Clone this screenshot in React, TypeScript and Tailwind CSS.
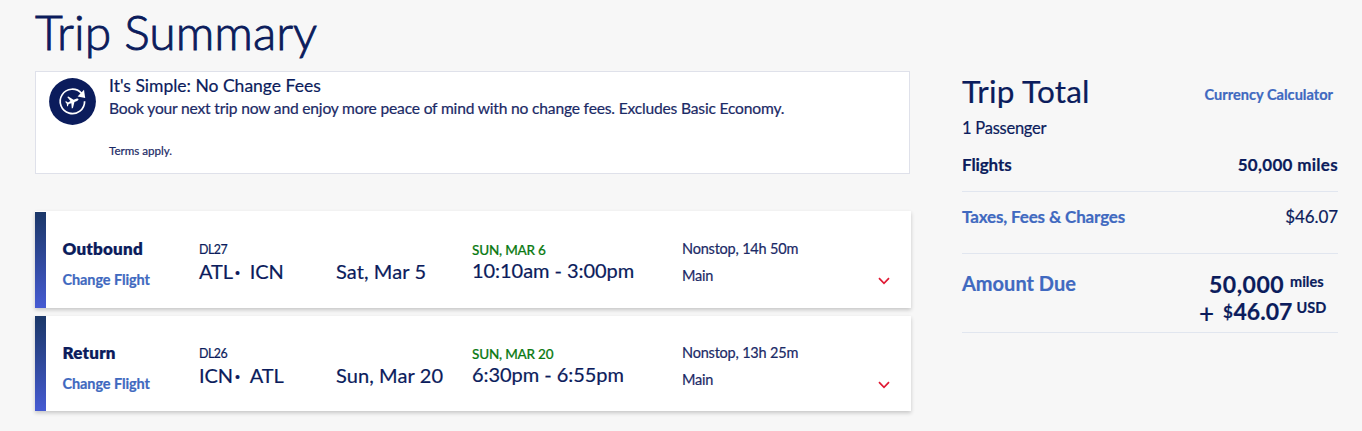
import React from "react";
import { clsx } from "clsx";

interface Flight {
  direction: string;
  number: string;
  from: string;
  to: string;
  date: string;
  arrival: string;
  times: string;
  duration: string;
  cabin: string;
}

const flights: Flight[] = [
  {
    direction: "Outbound",
    number: "DL27",
    from: "ATL",
    to: "ICN",
    date: "Sat, Mar 5",
    arrival: "SUN, MAR 6",
    times: "10:10am - 3:00pm",
    duration: "Nonstop, 14h 50m",
    cabin: "Main",
  },
  {
    direction: "Return",
    number: "DL26",
    from: "ICN",
    to: "ATL",
    date: "Sun, Mar 20",
    arrival: "SUN, MAR 20",
    times: "6:30pm - 6:55pm",
    duration: "Nonstop, 13h 25m",
    cabin: "Main",
  },
];

const NoChangeFeeIcon = () => (
  <svg viewBox="0 0 47 47" className="h-[47px] w-[47px] shrink-0">
    <circle cx="23.5" cy="23.5" r="23.4" fill="#0b1c5c" />
    <path
      d="M32.6 15.4A12.2 12.2 0 1 0 35.6 23.2"
      fill="none"
      stroke="#fff"
      strokeWidth="1.7"
    />
    <path d="M35 11.8L36.2 20L28.6 18.6Z" fill="#fff" />
    <g transform="translate(23.3 23.6) rotate(68) scale(0.58)" fill="#fff">
      <path d="M0 -11.5C1.3 -11.5 2 -9.6 2 -8L2 -3.2L10.5 3L10.5 5.2L2 2.6L1.5 7.4L4.4 9.8L4.4 11.5L0 10.3L-4.4 11.5L-4.4 9.8L-1.5 7.4L-2 2.6L-10.5 5.2L-10.5 3L-2 -3.2L-2 -8C-2 -9.6 -1.3 -11.5 0 -11.5Z" />
    </g>
  </svg>
);

const ChangeFeeBanner = () => (
  <div className="flex h-[103px] w-[875px] border border-[#dfe1ea] bg-white pl-[13px]">
    <div className="pt-[6px]">
      <NoChangeFeeIcon />
    </div>
    <div className="ml-[13px] pt-[2px]">
      <h2 className="text-[17.5px] leading-[23px]">It's Simple: No Change Fees</h2>
      <p className="text-[15.6px] leading-[23px] tracking-[-0.18px] text-[#1b2a66]">
        Book your next trip now and enjoy more peace of mind with no change fees. Excludes Basic Economy.
      </p>
      <p className="mt-[21px] text-[11.6px] leading-5 text-[#1b2a66]">Terms apply.</p>
    </div>
  </div>
);

interface FlightCardProps {
  flight: Flight;
  className?: string;
}

const FlightCard = ({ flight, className }: FlightCardProps) => (
  <div className={clsx("flex w-[876px] bg-white shadow-[0_2px_4px_rgba(0,0,0,0.2)]", className)}>
    <div className="w-[11px] bg-linear-to-b from-[#1b3768] to-[#465bd3]" />
    <div className="w-[138px] pt-[25px] pl-[16.5px]">
      <div className="text-[17px] leading-6 font-extrabold tracking-[0.2px]">{flight.direction}</div>
      <a className="mt-[9px] block text-[14.5px] leading-5 font-bold tracking-[-0.1px] text-[#4069c0]">Change Flight</a>
    </div>
    <div className="w-[137px] pt-[29.5px] pl-[15px]">
      <div className="text-[12.4px] leading-4 tracking-[-0.5px]">{flight.number}</div>
      <div className="mt-px flex text-[20px] leading-6 tracking-[-0.15px]">
        <span>{flight.from}</span>
        <span className="ml-[2px] w-3 font-bold">·</span>
        <span className="ml-[3px]">{flight.to}</span>
      </div>
    </div>
    <div className="w-[137px] pt-[47px] pl-[15px] text-[20px] leading-6 tracking-[0.1px]">{flight.date}</div>
    <div className="w-[210px] pt-[30px] pl-[14px]">
      <div className="text-[13.5px] leading-4 font-medium tracking-[-0.2px] text-[#0b7a12]">{flight.arrival}</div>
      <div className="text-[20px] leading-6 tracking-[-0.05px]">{flight.times}</div>
    </div>
    <div className="w-[196px] pt-[27px] pl-[14px] text-[14.5px] leading-5 tracking-[-0.2px] text-[#1b2a66]">
      <div>{flight.duration}</div>
      <div className="mt-[7px]">{flight.cabin}</div>
    </div>
    <svg viewBox="0 0 12 8" className="mt-[65px] ml-[14px] h-2 w-3" fill="none" stroke="#e01933" strokeWidth="1.7">
      <path d="M1 1.2L6 6.3L11 1.2" />
    </svg>
  </div>
);

const TripTotal = () => (
  <aside className="ml-[51px] w-[376px] pt-[70px]">
    <div className="flex justify-between">
      <h2 className="pt-px text-[31.5px] leading-10 tracking-[0.2px]">Trip Total</h2>
      <a className="mt-[15px] mr-[5px] text-[14.6px] leading-5 font-bold text-[#4069c0]">Currency Calculator</a>
    </div>
    <p className="mt-[5px] text-[16.5px] leading-6 tracking-[-0.25px]">1 Passenger</p>
    <div className="mt-[13px] flex h-[39px] justify-between border-b border-[#e1e6ef] text-[17px] leading-6 font-bold">
      <span className="tracking-[-0.1px]">Flights</span>
      <span className="tracking-[0.3px]">50,000 miles</span>
    </div>
    <div className="flex h-[62px] justify-between border-b border-[#e1e6ef] pt-[13px] text-[17px] leading-6">
      <span className="font-bold tracking-[-0.15px] text-[#4069c0]">Taxes, Fees & Charges</span>
      <span className="tracking-[-0.1px]">$46.07</span>
    </div>
    <div className="flex h-[79px] justify-between border-b border-[#e1e6ef] pt-[15px]">
      <span className="text-[20px] leading-7 font-bold text-[#4069c0]">Amount Due</span>
      <div className="w-[139px] pt-[2px] font-bold">
        <div className="flex h-[27px] pl-[10px] text-[23px] leading-[27px]">
          <span className="w-[81px] tracking-[0.5px]">50,000</span>
          <span className="text-[14.5px] leading-[21px]">miles</span>
        </div>
        <div className="flex h-[27px] text-[23px] leading-[27px]">
          <span className="w-6 text-[26px] leading-[31px] font-medium">+</span>
          <span className="w-[10.5px] text-[17px]">$</span>
          <span className="w-[63px]">46.07</span>
          <span className="text-[14.5px] leading-[20px]">USD</span>
        </div>
      </div>
    </div>
  </aside>
);

const App = () => {
  return (
    <div className="flex h-[431px] w-[1362px] overflow-hidden bg-[#f7f7f7] font-[Lato,sans-serif] whitespace-nowrap text-[#0b1c5c] [-webkit-text-stroke:0.2px]">
      <main className="pt-px pl-[35px]">
        <h1 className="h-[70px] pt-px text-[48px] leading-[60px] font-light [-webkit-text-stroke:0.9px]">Trip Summary</h1>
        <ChangeFeeBanner />
        <div className="mt-[37px] flex flex-col gap-2">
          {flights.map((flight, i) => (
            <FlightCard key={flight.number} flight={flight} className={i === 0 ? "h-[97px] pt-px" : "h-[95px]"} />
          ))}
        </div>
      </main>
      <TripTotal />
    </div>
  );
};

export default App;
